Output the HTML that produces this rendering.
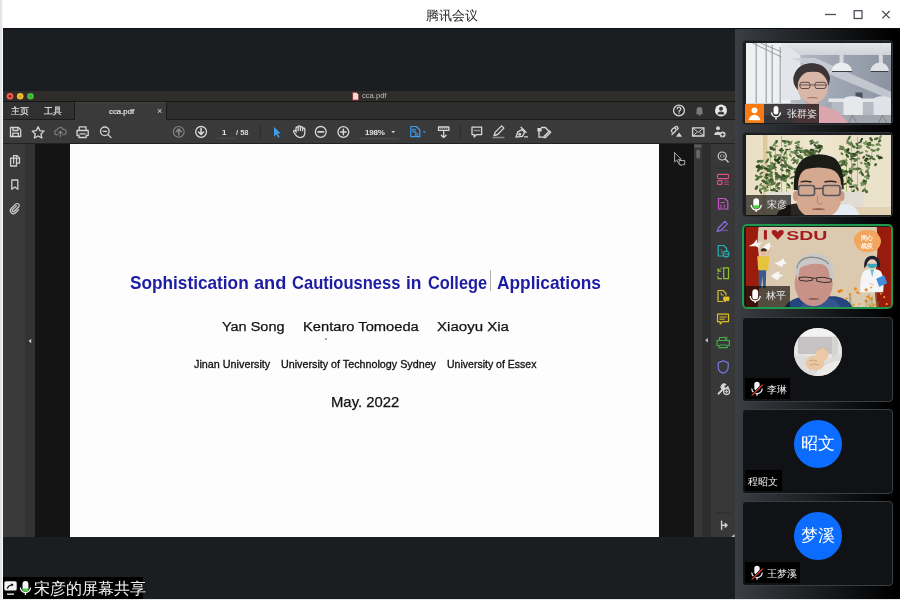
<!DOCTYPE html>
<html><head><meta charset="utf-8">
<style>
*{margin:0;padding:0;box-sizing:border-box}
html,body{width:900px;height:600px;overflow:hidden;background:#fff;font-family:"Liberation Sans",sans-serif}
.a,#tiles div{will-change:transform}
.a{position:absolute}
#title{left:0;top:0;width:900px;height:28px;background:#fff}
#title .t{left:2px;width:900px;top:6.8px;text-align:center;font-size:12.7px;color:#1e1e1e;line-height:18px}
#ledge{left:0;top:0;width:3px;height:600px;background:linear-gradient(90deg,#e2e4e8 0,#e2e4e8 2px,#fafafa 2px)}
#main{left:3px;top:28px;width:732px;height:571px;background:#1b1e21;border-top:1px solid #101214}
#bstrip{left:0;top:599px;width:900px;height:1px;background:#e8e8e8}
/* pdf window */
#pdf{left:3px;top:91px;width:732px;height:446px;background:#383838;overflow:hidden}
#ptitle{left:0;top:0;width:732px;height:11px;background:#2e2d2a;border-bottom:1px solid #161616}
#ptabs{left:0;top:11px;width:732px;height:18px;background:#2e2e2e;border-bottom:1px solid #1c1c1c}
#ptool{left:0;top:29px;width:732px;height:24px;background:#3a3a3a;border-bottom:1px solid #222}
#pbody{left:0;top:53px;width:732px;height:393px;background:#141414}
#right{left:735px;top:28px;width:165px;height:571px;background:linear-gradient(90deg,#3b3e43 0px,#2a2d31 40px,#0d0e10 120px,#000 160px);border-top:1px solid #0c0d0f}
.tile{position:absolute;left:743px;width:150px;height:85px;border-radius:4px;background:#222529;border:1px solid #2e3136}
.lbl{position:absolute;color:#eee;font-size:11px;line-height:19px;background:rgba(0,0,0,.75);white-space:nowrap}
</style></head><body>
<div id="title" class="a"><div class="t a">腾讯会议</div>
<svg class="a" style="left:820px;top:5px" width="75" height="20" viewBox="0 0 75 20">
<path d="M5 9.5H16" stroke="#4c5159" stroke-width="1.3"/>
<rect x="34.2" y="5.7" width="7.8" height="7.8" fill="none" stroke="#4c5159" stroke-width="1.3"/>
<path d="M62.3 6L69.7 13.4M69.7 6L62.3 13.4" stroke="#4c5159" stroke-width="1.3"/>
</svg>
</div>
<div id="ledge" class="a"></div>
<div id="main" class="a"></div>
<div id="pdf" class="a">
 <div id="ptitle" class="a"></div>
 <div id="ptabs" class="a"></div>
 <div class="a" style="left:0;top:11px;width:72px;height:18px;background:#303030;border-right:1px solid #1c1c1c;border-bottom:1px solid #1c1c1c"></div>
 <div class="a" style="left:72px;top:11px;width:91px;height:18px;background:#3a3a3a;border-top:1px solid #424242"></div>
 <div class="a" style="left:163px;top:11px;width:1px;height:18px;background:#1c1c1c"></div>
 <div id="ptool" class="a"></div>
 <div id="pbody" class="a"></div>
 <div class="a" style="left:0;top:53px;width:22px;height:393px;background:#3a3a3a"></div>
 <div class="a" style="left:22px;top:53px;width:10px;height:393px;background:#323232"></div>
 <div class="a" style="left:67px;top:53px;width:589px;height:393px;background:#fdfdfd"></div>
 <div class="a" style="left:691px;top:53px;width:8px;height:393px;background:#383838"></div>
 <div class="a" style="left:699px;top:53px;width:9px;height:393px;background:#2e2e2e"></div>
 <div class="a" style="left:708px;top:53px;width:24px;height:393px;background:#383838"></div>
</div>
<svg class="a" id="icons" style="left:0;top:0" width="900" height="600" viewBox="0 0 900 600" fill="none" stroke-linecap="round" stroke-linejoin="round">
<!-- traffic lights -->
<circle cx="10" cy="96.3" r="3.3" fill="#fb5b55"/><circle cx="10" cy="96.3" r="1.2" fill="#7d120e"/>
<circle cx="20.2" cy="96.3" r="3.3" fill="#f4bc2c"/><circle cx="20.2" cy="96.3" r="1" fill="#c4901a"/>
<circle cx="30.5" cy="96.3" r="3.3" fill="#45c03c"/><circle cx="30.5" cy="96.3" r="1" fill="#2f9a2a"/>
<!-- pdf file icon in title -->
<path d="M353 92.5h3.5l2 2v5.5h-5.5z" fill="#e8e0e0" stroke="#b04040" stroke-width=".8"/>
<!-- toolbar icons -->
<g stroke="#d4d4d4" stroke-width="1.3">
 <path d="M10.5 127.5h8l2.2 2.2v6.8h-10.2z"/><path d="M13 127.5v3h5v-3"/><path d="M12.8 136.5v-3.3h5.6v3.3"/>
 <path d="M38.1 126.8l1.8 3.8 4.1.5-3 2.9.8 4-3.7-2-3.7 2 .8-4-3-2.9 4.1-.5z"/>
 <path d="M77 130.5h11.2v5h-2v2h-7.2v-2h-2z"/><path d="M79.2 130.3v-3.4h6.8v3.4"/><path d="M80 133.8h5.2"/>
 <circle cx="104.8" cy="131.3" r="4.3"/><path d="M107.8 134.4l3.2 3.2"/><path d="M103 131.3h3.6" stroke-width="1.2"/>
</g>
<g stroke="#878787" stroke-width="1.1">
 <g transform="translate(60.4 132) scale(.85) translate(-60.4 -132)" stroke-width="1.2"><path d="M57.5 135.3h-1a2.8 2.8 0 0 1 0-5.6 3.8 3.8 0 0 1 7.3-.6 2.6 2.6 0 0 1 .6 6.2h-1.2"/><path d="M60.4 137.5v-6.3M58.3 133.2l2.1-2.1 2.1 2.1"/></g>
 <circle cx="178.75" cy="131.85" r="5.4"/><path d="M178.75 135v-5.5M176.3 131.6l2.45-2.5 2.45 2.5" stroke-width="1.6"/>
</g>
<g stroke="#d8d8d8" stroke-width="1.3">
 <circle cx="201.1" cy="131.9" r="5.4"/><path d="M201.1 128.6v5.5M198.6 132l2.5 2.5 2.5-2.5" stroke-width="1.6"/>
 <circle cx="320.75" cy="131.9" r="5.4"/><path d="M318 131.9h5.5" stroke-width="1.6"/>
 <circle cx="343.35" cy="132" r="5.4"/><path d="M340.6 132h5.5M343.35 129.3v5.5" stroke-width="1.5"/>
 <path d="M296 131.5v-3.5a1.1 1.1 0 0 1 2.2 0v2.5v-3.5a1.1 1.1 0 0 1 2.2 0v3.5v-2.8a1.1 1.1 0 0 1 2.2 0v3v-1.6a1.1 1.1 0 0 1 2.2 0v3.5c0 3-2 5-4.8 5c-2.2 0-3.4-1.2-4.6-3l-1.6-2.6a1 1 0 0 1 1.6-1.2l1 1.2z"/>
 <path d="M438.5 127h10.4v3.4h-10.4z"/><path d="M440.8 128.7h.1M442.8 128.7h.1M444.8 128.7h.1M446.8 128.7h.1" stroke-width="1"/><path d="M443.7 131.5v6M441.3 135.2l2.4 2.4 2.4-2.4"/>
 <path d="M472 127.2h9.6v7.4h-5.2l-2.2 2.4v-2.4h-2.2z"/><path d="M474.2 130.5h5.2" stroke="#8a8a8a" stroke-width="1.6"/>
 <path d="M494 135.5l1.2-3.4 6.5-6.2 2.2 2.2-6.3 6.4z"/><path d="M493 137.5h11" stroke="#8a8a8a"/>
 <path d="M516 137.2l1.8-5.4 4.2-2.2 2.6 2.6-2.2 4.2z"/><path d="M521 127.2l5 5"/><circle cx="519.7" cy="134.2" r=".9"/><path d="M524.5 136.8h3" stroke-width="1.3"/>
 <path d="M541.5 127.5h3.8l3.2 3.2"/><path d="M539 131v6.2h4"/><path d="M544 136.5l5.5-5.5 1.2 1.2-5.5 5.5h-1.2z"/><path d="M538 128.6h3v2.2h-3z" fill="#c9c9c9"/>
 <circle cx="679" cy="110.5" r="5.4"/><path d="M677.2 108.9a1.8 1.8 0 1 1 2.5 1.7c-.5.2-.7.6-.7 1.1v.4M679 113.6v.1" stroke-width="1.2"/>
 <path d="M672 134.5l3.8-3.8a1.8 1.8 0 0 0-2.5-2.5l-1.3 1.3a1.8 1.8 0 0 0 0 2.5M677.5 129.5a1.8 1.8 0 0 0 0-2.5 1.8 1.8 0 0 0-2.5 0"/><path d="M676 136.8l3-4.2 3.2 4.2z" fill="#d2d2d2" stroke="none"/>
 <path d="M692.6 127.8h11.3v8.2h-11.3z"/><path d="M692.6 127.8l5.65 4.5 5.65-4.5M692.6 136l4-3.4M703.9 136l-4-3.4" stroke-width=".9"/>
</g>
<path d="M274 127v9.6l2.3-2.4 1.9 3.6 1.4-.7-1.9-3.5 3.1-.2z" fill="#3c9ff2"/>
<g stroke="#3c9ff2" stroke-width="1.2"><path d="M410.8 126.5h5.5l3.5 3.5v6.6h-9z"/><path d="M413 129.3h2.2v2.2h-2.2zM415.6 133.8h2.2v2.2h-2.2zM414.1 132.2l2.6 1" stroke-width=".9"/></g>
<path d="M422.8 131.2h3.2l-1.6 1.9z" fill="#3c9ff2"/>
<path d="M391.3 131h3.8l-1.9 2.2z" fill="#d0d0d0"/>
<path d="M218 138.3h17.5M360 138.7h38.3" stroke="#4e4e4e" stroke-width="1"/>
<path d="M260.3 125.3v13.4M460.3 125.3v13.4" stroke="#2c2c2c" stroke-width="1"/>
<!-- bell -->
<path d="M695.6 114.2h7.8l-1-1.3v-3.1a2.9 2.9 0 0 0-5.8 0v3.1z" fill="#7b7b7b"/><circle cx="699.5" cy="115" r="1" fill="#7b7b7b"/>
<!-- user circle -->
<circle cx="721" cy="110.5" r="6" fill="#e6e6e6"/><circle cx="721" cy="108.7" r="2" fill="#3a3a3a"/><path d="M717.6 114.4a3.4 3 0 0 1 6.8 0z" fill="#3a3a3a"/>
<!-- person + -->
<g fill="#d2d2d2"><circle cx="718" cy="128.2" r="2"/><path d="M714.2 135a3.8 3.3 0 0 1 7.2-1.4v1.4z"/><circle cx="722.6" cy="134.6" r="3"/></g>
<path d="M721.2 134.6h2.8M722.6 133.2v2.8" stroke="#393939" stroke-width=".9"/>
<!-- left sidebar -->
<g stroke="#d0d0d0" stroke-width="1.3">
 <path d="M13.6 163.2v-7.6h3.6l2.3 2.3v5.3h-2.6"/><path d="M16.6 155.8v2.6h2.6" stroke-width="1"/><path d="M10.6 158.2h5.9v7.8h-5.9z"/>
 <path d="M11.8 180v9.3l3-2.2 3 2.2v-9.3z"/>
 <g transform="translate(14.5 208) scale(.85) translate(-14.5 -208)"><path d="M16.8 205.5l-4.4 4.4a1.3 1.3 0 0 0 1.9 1.9l5-5a2.4 2.4 0 0 0-3.4-3.4l-5.2 5.2a3.5 3.5 0 0 0 5 5l3.5-3.5" stroke-width="1.4"/></g>
</g>
<path d="M31.2 338.8v4.4l-2.6-2.2z" fill="#cfcfcf"/>
<path d="M707.8 338v4.4l-2.6-2.2z" fill="#cfcfcf"/>
<!-- scrollbar -->
<rect x="694.5" y="144.5" width="7" height="3" fill="#5c5c5c"/>
<rect x="696.3" y="149.5" width="3.6" height="9" rx="1.8" fill="#6a6a6a"/>
<!-- cursor in dark canvas -->
<path d="M674.6 152.8v9.2l2.1-2 1.8 3.1" stroke="#bdbdbd" stroke-width=".9"/><path d="M674.6 152.8l6.6 6.4-2.9.2" stroke="#bdbdbd" stroke-width=".9"/><path d="M679.5 160.5h5.2v4.2h-2.4l-1.2 1.2v-1.2h-1.6z" stroke="#bdbdbd" stroke-width=".9"/>
<!-- right tools -->
<g stroke-width="1.2">
 <g stroke="#d2d2d2"><circle cx="722.2" cy="156" r="4"/><path d="M725.2 159l3 3"/><path d="M721.2 154.8l-1.1 1.2 1.1 1.2M723.2 154.8l1.1 1.2-1.1 1.2" stroke-width=".8"/></g>
 <path d="M716.4 168h14" stroke="#2b2b2b" stroke-width="1"/>
 <g stroke="#dc4f8c"><rect x="717.5" y="174.3" width="11" height="4.3" rx="1"/><rect x="717.5" y="180.6" width="4.5" height="3.8" rx="1"/><path d="M724.5 180.9h4M724.5 182.7h4M724.5 184.5h4" stroke-width=".6"/></g>
 <g stroke="#c656cc"><path d="M718.5 198.5h6.3l3 3v7.5h-9.3z"/><path d="M721 202.5h3.4M721 205v2.5M724.3 205v2.5" stroke-width="1"/></g>
 <g stroke="#8e70ea"><path d="M717.2 231.5l1.2-3.5 6.5-6.6 2.4 2.4-6.5 6.6z"/><path d="M722.4 230.8c1-.8 1.7-1.2 2.2-.4.4.6 1 .6 1.6 0 .4-.4.8-.4 1.6.4" stroke-width=".9"/></g>
 <g stroke="#27b2b6"><path d="M718.2 245.5h5.5l3 3v2.2M722.5 256h-4.3v-10.5"/><circle cx="726" cy="254" r="2.9"/><path d="M724.6 254h2.8" stroke-width="1"/><path d="M721 249.5l1.2 2.5-1.2 1" stroke-width=".8"/></g>
 <g stroke="#8fc23a"><path d="M718 276.5v2.2h3.5M718 273v.8M718 269.5v1"/><path d="M723.7 267.8h4.8v10.9h-4.8z"/><path d="M721.8 267.7l-3.6 3.6M718.3 268.8v2.5h2.5" stroke-width="1"/></g>
 <g stroke="#e3c12b"><path d="M718 290.5h5.2l2.8 2.8v1.8M722.8 301.5h-4.8v-11"/><path d="M724 297h5v3.6h-2.8l-1.4 1.4v-1.4h-.8z" fill="#e3c12b" stroke-width=".9"/><path d="M721.2 292.8v2.2h2.2" stroke-width=".9"/></g>
 <g stroke="#dcbf22"><path d="M717.5 314.2h11v7.5h-6l-2.3 2.3v-2.3h-2.7z"/><path d="M719.8 317h6.5M719.8 319.2h4.5" stroke-width="1"/></g>
 <g stroke="#3fb046"><path d="M717 340.5h12.4v5h-2.2v2.2h-8v-2.2h-2.2z"/><path d="M719.4 340.3v-2.8h5.2l2 2" /><path d="M720.2 345h6" stroke-width="1"/><path d="M725.6 336.8l.9 1.3M727.5 337.5l-.9 1" stroke-width=".8"/></g>
 <g stroke="#7878e8"><path d="M723.2 360.8l5 2.1v4c0 3.2-2.5 5.4-5 6.2-2.5-.8-5-3-5-6.2v-4z"/></g>
 <g stroke="#d6d6d6"><path d="M718.6 393.6l4.2-4.2" stroke-width="2"/><path d="M722.2 389.6a3.2 3.2 0 0 1 3.9-5.2l-1.9 1.9.4 1.4 1.4.4 1.9-1.9a3.2 3.2 0 0 1-5.1 3.9z" fill="#d6d6d6" stroke-width=".8"/><circle cx="726.6" cy="391.6" r="3" fill="#3a3a3a" stroke-width="1.1"/><path d="M725.1 391.6h3M726.6 390.1v3" stroke-width=".9"/></g>
 <path d="M716 513h14" stroke="#2b2b2b" stroke-width="1"/>
 <g stroke="#d0d0d0" stroke-width="1.4"><path d="M721.6 521.2v8"/><path d="M722.5 525.2h4.5M725.2 523.4l1.9 1.8-1.9 1.8"/></g>
</g>
<path d="M731.5 537l3-3v3z" fill="#cfcfcf"/>
</svg>
<div class="a" style="left:361.5px;top:91px;font-size:7.6px;line-height:10px;color:#bdbdbd">cca.pdf</div>
<div class="a" style="left:11px;top:104px;font-size:9px;line-height:14px;color:#e6e6e6;letter-spacing:-0.5px;-webkit-text-stroke:.15px #e6e6e6">主页</div>
<div class="a" style="left:43.5px;top:104px;font-size:9px;line-height:14px;color:#e6e6e6;letter-spacing:-0.5px;-webkit-text-stroke:.15px #e6e6e6">工具</div>
<div class="a" style="left:108.5px;top:104.5px;font-size:7.8px;line-height:14px;color:#e4e4e4;-webkit-text-stroke:.2px #e4e4e4">cca.pdf</div>
<div class="a" style="left:157px;top:104px;font-size:9px;line-height:14px;color:#d8d8d8">×</div>
<div class="a" style="left:222px;top:127px;font-size:8px;line-height:12px;color:#e4e4e4;font-weight:bold">1</div>
<div class="a" style="left:236px;top:127.3px;font-size:7.5px;line-height:12px;color:#dcdcdc;font-weight:bold">/ 58</div>
<div class="a" style="left:365px;top:127px;font-size:8px;line-height:12px;color:#e4e4e4;letter-spacing:-0.2px;font-weight:bold">198%</div>
<div id="page" class="a" style="left:0;top:0;width:900px;height:600px;pointer-events:none">
<style>#page div{position:absolute;white-space:nowrap;transform-origin:0 0}
#page .ti{font-size:18.2px;line-height:18px;font-weight:bold;color:#1d1da3;top:274px}
#page .au{font-size:13.7px;line-height:14px;color:#111;top:320px;-webkit-text-stroke:.25px #111}
#page .af{font-size:10.2px;line-height:10px;color:#111;top:359.8px;-webkit-text-stroke:.3px #111}
</style>
<div class="ti" style="left:130px;transform:scaleX(.947)">Sophistication</div>
<div class="ti" style="left:254px;transform:scaleX(1)">and</div>
<div class="ti" style="left:291.5px;transform:scaleX(.909)">Cautiousness</div>
<div class="ti" style="left:406px;transform:scaleX(.96)">in</div>
<div class="ti" style="left:428px;transform:scaleX(.9)">College</div>
<div class="ti" style="left:496.5px;transform:scaleX(.953)">Applications</div>
<div class="au" style="left:222px;transform:scaleX(1.057)">Yan Song</div>
<div class="au" style="left:302.5px;transform:scaleX(1.074)">Kentaro Tomoeda</div>
<div class="au" style="left:437px;transform:scaleX(1.1)">Xiaoyu Xia</div>
<div class="af" style="left:193.5px;transform:scaleX(1.06)">Jinan University</div>
<div class="af" style="left:280.5px;transform:scaleX(1.054)">University of Technology Sydney</div>
<div class="af" style="left:447px;transform:scaleX(1.033)">University of Essex</div>
<div class="au" style="left:331px;top:394px;font-size:15px;line-height:15px;transform:scaleX(.99)">May. 2022</div>
</div>
<div class="a" style="left:489.5px;top:270px;width:1px;height:21px;background:#b0b0b0"></div>
<div class="a" style="left:324.5px;top:337.5px;width:1.5px;height:1.5px;background:#888;border-radius:1px"></div>
<div id="right" class="a"></div>
<div id="tiles" class="a" style="left:0;top:0;width:900px;height:600px">
<style>
#tiles .tile{position:absolute;left:742px;width:151px;height:85px;border-radius:4px;background:#1c1f22;border:1px solid #2d3035;overflow:hidden}
#tiles .e{position:absolute;left:742px;width:151px;height:85px;border-radius:4px;background:#111215;border:1.5px solid #3a3d42;overflow:hidden}
#tiles .img{position:absolute;left:3px;top:2px;width:144.5px;height:80px;overflow:hidden}
#tiles .a{position:absolute}
#tiles .img div,#tiles .img svg{position:absolute}
#tiles .lbl{position:absolute;left:2.5px;height:20.5px;color:#f0f0f0;font-size:11px;line-height:20px;white-space:nowrap;background:rgba(0,0,0,.6)}
#tiles .e .lbl{background:#000}
#tiles .av{position:absolute;left:50.5px;top:10.3px;width:47.6px;height:47.6px;border-radius:50%;background:#0b6cff;color:#fff;font-size:16.5px;line-height:47px;text-align:center;overflow:hidden}
</style>
<div class="tile" style="top:40px"><div class="img" style="background:#aeb3bd">
<svg width="145" height="80" viewBox="745.5 43 145 80" style="left:0;top:0">
<defs><filter id="bl1" x="-5%" y="-5%" width="110%" height="110%"><feGaussianBlur stdDeviation="0.55"/></filter>
<linearGradient id="wall1" x1="0" y1="0" x2="1" y2="0"><stop offset="0" stop-color="#dadde2"/><stop offset=".35" stop-color="#b5bac5"/><stop offset=".6" stop-color="#a0a7b4"/><stop offset="1" stop-color="#8b93a2"/></linearGradient>
<linearGradient id="ceil1" x1="0" y1="0" x2="0" y2="1"><stop offset="0" stop-color="#e4e6e9"/><stop offset="1" stop-color="#cfd2d7"/></linearGradient>
</defs>
<g filter="url(#bl1)">
<rect x="745" y="43" width="146" height="80" fill="url(#wall1)"/>
<path d="M778 43H891V55H800z" fill="url(#ceil1)"/>
<path d="M745 43H781L790 55V103H745z" fill="#eef0f2"/>
<path d="M781 43L800 55V100L781 100z" fill="#e2e5e9"/>
<path d="M790 58L891 100V92L815 58z" fill="#cdd1d8" opacity=".8"/>
<path d="M755.7 43V103M765.7 43V103M771.7 45V103M779.7 47V103" stroke="#8f939a" stroke-width="1"/>
<path d="M752 43L781 57M760 43L781 52" stroke="#8f939a" stroke-width=".9"/>
<path d="M841 43V63M880.3 43V63" stroke="#d8dade" stroke-width=".8"/>
<rect x="839" y="55" width="4" height="8" fill="#d6d9de"/><rect x="878.3" y="55" width="4" height="8" fill="#d6d9de"/>
<path d="M831 71.5Q832 63 841 62.5Q850.5 63 851.7 71.5z" fill="#eceef1"/>
<path d="M869.7 71.5Q871 63 879.5 62.5Q887.5 63 888.5 71.5z" fill="#dfe3e8"/>
<path d="M831.5 71.5H851.5M870 71.5H888" stroke="#3a3c40" stroke-width="1"/>
<rect x="828" y="98.5" width="63" height="3.5" fill="#e4e6e9"/>
<rect x="831" y="102" width="58" height="13" fill="#b6bac2"/>
<rect x="855" y="92.5" width="7" height="6" fill="#47505e"/>
<path d="M843 115V100Q843 96.5 852 96.3Q862.3 96.5 862.3 100V115z" fill="#e6e8ec"/>
<path d="M873 115V100Q873 96.5 882 96.3Q891 96.5 891 100V115z" fill="#dfe2e6"/>
<rect x="745" y="115" width="146" height="8" fill="#a2a6ae"/>
<path d="M852 115L848 123M852 115L856 123M882 115L878 123M882 115L886 123" stroke="#777b82" stroke-width=".8"/>
<path d="M792 123Q795 107 812 105Q838 106 847 123z" fill="#dba5ad"/>
<rect x="805" y="96" width="14" height="11" fill="#c9a39a"/>
<ellipse cx="811" cy="79.5" rx="18.2" ry="16" fill="#3d3636"/>
<ellipse cx="812.3" cy="87" rx="15.3" ry="16.3" fill="#d8b6a8"/>
<path d="M794 84Q792 66 808 63.5Q826 62 829.5 78L828 82Q826 73 818 72Q806 71 800 74Q797 78 797 90z" fill="#3d3636"/>
<path d="M798.5 85h28" stroke="#5e4c48" stroke-width=".9"/>
<rect x="799.5" y="82.3" width="10" height="6.2" rx="2" fill="none" stroke="#5e4c48" stroke-width="1"/>
<rect x="814.5" y="82.3" width="11" height="6.2" rx="2" fill="none" stroke="#5e4c48" stroke-width="1"/>
<path d="M807 98Q812 97 817 98" stroke="#a87868" stroke-width="1"/>
</g>
</svg>
</div>
<div class="a" style="left:2px;top:62.6px;width:19.4px;height:19.4px;background:#fa7a12"></div>
<svg class="a" style="left:2.2px;top:62.6px" width="19" height="19" viewBox="0 0 19 19"><circle cx="9.5" cy="6.3" r="2.9" fill="#fff"/><path d="M3.5 16.2Q4.8 10.8 9.5 10.7Q14.2 10.8 15.5 16.2z" fill="#fff"/></svg>
<div class="a" style="left:21.4px;top:62.6px;width:55.4px;height:19.4px;background:rgba(10,4,4,.7)"></div>
<svg class="a" style="left:27px;top:64px" width="12" height="16" viewBox="0 0 12 16"><rect x="3.6" y="1" width="4.8" height="8.6" rx="2.4" fill="#fff"/><path d="M1.6 7.5a4.4 4.4 0 0 0 8.8 0" stroke="#fff" stroke-width="1.4" fill="none"/><path d="M6 12v2.4" stroke="#fff" stroke-width="1.4"/></svg>
<div class="a" style="left:44px;top:62.5px;font-size:10.1px;line-height:20px;color:#f2f2f2">张群姿</div>
</div>
<div class="tile" style="top:132px"><div class="img" style="background:#e3d6bb">
<svg width="145" height="80" viewBox="745.5 135 145 80" style="left:0;top:0">
<defs><filter id="bl2" x="-5%" y="-5%" width="110%" height="110%"><feGaussianBlur stdDeviation="0.5"/></filter>
<linearGradient id="bg2" x1="0" y1="0" x2="1" y2="0"><stop offset="0" stop-color="#eadfc4"/><stop offset=".5" stop-color="#efe6cf"/><stop offset="1" stop-color="#e6dac0"/></linearGradient></defs>
<g filter="url(#bl2)">
<rect x="745" y="135" width="146" height="80" fill="url(#bg2)"/>
<rect x="762.5" y="135" width="4.5" height="80" fill="#dcc9a0"/>
<rect x="862" y="135" width="29" height="80" fill="#ebe2cc"/>
<path d="M775 192V140M781 192V136M786 192V150M792 190L804 150M770 190V155" stroke="#a8b878" stroke-width=".9"/>
<path d="M851 193V140M857 193V137M846 192V150M864 190L872 150" stroke="#a8b878" stroke-width=".9"/>
<ellipse cx="766.0" cy="177.9" rx="2.3" ry="1.2" fill="#465f34" transform="rotate(10 766.0 177.9)"/>
<ellipse cx="760.1" cy="176.4" rx="2.5" ry="0.9" fill="#587640" transform="rotate(-6 760.1 176.4)"/>
<ellipse cx="759.1" cy="177.2" rx="2.6" ry="1.2" fill="#587640" transform="rotate(-12 759.1 177.2)"/>
<ellipse cx="766.0" cy="183.6" rx="1.8" ry="0.8" fill="#587640" transform="rotate(3 766.0 183.6)"/>
<ellipse cx="757.3" cy="166.1" rx="2.5" ry="1.3" fill="#3e5a2e" transform="rotate(-21 757.3 166.1)"/>
<ellipse cx="769.0" cy="166.3" rx="2.6" ry="1.1" fill="#3e5a2e" transform="rotate(19 769.0 166.3)"/>
<ellipse cx="766.1" cy="168.9" rx="3.2" ry="1.4" fill="#2f4724" transform="rotate(25 766.1 168.9)"/>
<ellipse cx="762.9" cy="167.3" rx="1.6" ry="1.2" fill="#67844c" transform="rotate(-47 762.9 167.3)"/>
<ellipse cx="758.4" cy="169.3" rx="3.1" ry="1.4" fill="#4e6c3a" transform="rotate(-60 758.4 169.3)"/>
<ellipse cx="760.6" cy="189.1" rx="2.1" ry="1.3" fill="#7a9660" transform="rotate(-10 760.6 189.1)"/>
<ellipse cx="768.5" cy="166.4" rx="2.0" ry="0.9" fill="#587640" transform="rotate(-20 768.5 166.4)"/>
<ellipse cx="777.2" cy="184.3" rx="1.7" ry="1.3" fill="#4e6c3a" transform="rotate(-59 777.2 184.3)"/>
<ellipse cx="766.2" cy="175.6" rx="2.5" ry="1.1" fill="#587640" transform="rotate(-37 766.2 175.6)"/>
<ellipse cx="772.1" cy="164.2" rx="2.2" ry="1.1" fill="#587640" transform="rotate(59 772.1 164.2)"/>
<ellipse cx="756.0" cy="187.7" rx="2.5" ry="1.5" fill="#465f34" transform="rotate(-58 756.0 187.7)"/>
<ellipse cx="760.1" cy="191.9" rx="2.6" ry="0.9" fill="#2f4724" transform="rotate(59 760.1 191.9)"/>
<ellipse cx="760.7" cy="168.3" rx="2.5" ry="1.4" fill="#465f34" transform="rotate(-14 760.7 168.3)"/>
<ellipse cx="757.6" cy="166.7" rx="1.9" ry="1.2" fill="#587640" transform="rotate(-15 757.6 166.7)"/>
<ellipse cx="766.0" cy="190.7" rx="2.9" ry="0.9" fill="#7a9660" transform="rotate(-14 766.0 190.7)"/>
<ellipse cx="769.8" cy="169.9" rx="2.9" ry="1.0" fill="#3e5a2e" transform="rotate(-37 769.8 169.9)"/>
<ellipse cx="772.3" cy="190.1" rx="2.7" ry="1.1" fill="#3e5a2e" transform="rotate(-2 772.3 190.1)"/>
<ellipse cx="757.7" cy="161.5" rx="1.6" ry="1.5" fill="#4e6c3a" transform="rotate(-31 757.7 161.5)"/>
<ellipse cx="771.5" cy="168.2" rx="3.0" ry="1.1" fill="#465f34" transform="rotate(2 771.5 168.2)"/>
<ellipse cx="776.4" cy="191.3" rx="1.9" ry="1.2" fill="#3e5a2e" transform="rotate(42 776.4 191.3)"/>
<ellipse cx="769.5" cy="169.0" rx="2.8" ry="0.8" fill="#3e5a2e" transform="rotate(-11 769.5 169.0)"/>
<ellipse cx="761.5" cy="161.5" rx="2.1" ry="1.2" fill="#67844c" transform="rotate(-44 761.5 161.5)"/>
<ellipse cx="764.0" cy="188.5" rx="2.6" ry="1.3" fill="#67844c" transform="rotate(10 764.0 188.5)"/>
<ellipse cx="759.1" cy="161.1" rx="2.3" ry="1.1" fill="#4e6c3a" transform="rotate(-23 759.1 161.1)"/>
<ellipse cx="756.7" cy="179.1" rx="2.3" ry="1.3" fill="#4e6c3a" transform="rotate(-22 756.7 179.1)"/>
<ellipse cx="778.0" cy="162.4" rx="2.1" ry="0.8" fill="#2f4724" transform="rotate(52 778.0 162.4)"/>
<ellipse cx="772.2" cy="164.1" rx="2.1" ry="1.3" fill="#67844c" transform="rotate(48 772.2 164.1)"/>
<ellipse cx="775.2" cy="173.3" rx="1.6" ry="1.1" fill="#465f34" transform="rotate(-58 775.2 173.3)"/>
<ellipse cx="770.6" cy="172.1" rx="2.5" ry="0.9" fill="#4e6c3a" transform="rotate(17 770.6 172.1)"/>
<ellipse cx="777.9" cy="188.2" rx="2.1" ry="1.5" fill="#587640" transform="rotate(23 777.9 188.2)"/>
<ellipse cx="766.1" cy="174.8" rx="1.6" ry="1.3" fill="#2f4724" transform="rotate(-56 766.1 174.8)"/>
<ellipse cx="769.2" cy="175.4" rx="3.1" ry="0.9" fill="#3e5a2e" transform="rotate(34 769.2 175.4)"/>
<ellipse cx="770.5" cy="175.6" rx="2.1" ry="0.9" fill="#4e6c3a" transform="rotate(13 770.5 175.6)"/>
<ellipse cx="767.4" cy="184.1" rx="2.6" ry="1.1" fill="#67844c" transform="rotate(47 767.4 184.1)"/>
<ellipse cx="763.2" cy="181.3" rx="2.6" ry="1.4" fill="#3e5a2e" transform="rotate(31 763.2 181.3)"/>
<ellipse cx="760.4" cy="166.9" rx="2.5" ry="1.0" fill="#3e5a2e" transform="rotate(-44 760.4 166.9)"/>
<ellipse cx="766.9" cy="186.8" rx="1.6" ry="0.8" fill="#465f34" transform="rotate(58 766.9 186.8)"/>
<ellipse cx="774.1" cy="163.6" rx="2.0" ry="0.9" fill="#7a9660" transform="rotate(-10 774.1 163.6)"/>
<ellipse cx="769.8" cy="175.8" rx="2.7" ry="1.4" fill="#67844c" transform="rotate(15 769.8 175.8)"/>
<ellipse cx="763.0" cy="186.5" rx="3.0" ry="0.8" fill="#67844c" transform="rotate(25 763.0 186.5)"/>
<ellipse cx="768.6" cy="169.9" rx="2.5" ry="1.2" fill="#465f34" transform="rotate(-11 768.6 169.9)"/>
<ellipse cx="760.2" cy="184.6" rx="1.9" ry="0.9" fill="#67844c" transform="rotate(-54 760.2 184.6)"/>
<ellipse cx="769.8" cy="174.3" rx="2.4" ry="1.2" fill="#587640" transform="rotate(-16 769.8 174.3)"/>
<ellipse cx="757.7" cy="166.3" rx="2.3" ry="0.9" fill="#465f34" transform="rotate(-59 757.7 166.3)"/>
<ellipse cx="766.4" cy="182.9" rx="1.9" ry="1.3" fill="#3e5a2e" transform="rotate(5 766.4 182.9)"/>
<ellipse cx="776.8" cy="176.0" rx="1.8" ry="1.4" fill="#465f34" transform="rotate(24 776.8 176.0)"/>
<ellipse cx="760.9" cy="173.1" rx="2.2" ry="1.1" fill="#587640" transform="rotate(-36 760.9 173.1)"/>
<ellipse cx="775.5" cy="160.2" rx="2.5" ry="1.4" fill="#2f4724" transform="rotate(36 775.5 160.2)"/>
<ellipse cx="776.8" cy="174.8" rx="3.2" ry="0.9" fill="#587640" transform="rotate(44 776.8 174.8)"/>
<ellipse cx="773.6" cy="189.6" rx="1.9" ry="1.4" fill="#4e6c3a" transform="rotate(58 773.6 189.6)"/>
<ellipse cx="777.5" cy="177.2" rx="3.1" ry="1.0" fill="#465f34" transform="rotate(26 777.5 177.2)"/>
<ellipse cx="756.3" cy="176.2" rx="2.2" ry="1.2" fill="#4e6c3a" transform="rotate(32 756.3 176.2)"/>
<ellipse cx="766.7" cy="160.9" rx="3.0" ry="1.1" fill="#465f34" transform="rotate(-56 766.7 160.9)"/>
<ellipse cx="767.7" cy="182.0" rx="2.3" ry="1.5" fill="#3e5a2e" transform="rotate(48 767.7 182.0)"/>
<ellipse cx="767.4" cy="181.7" rx="3.1" ry="1.1" fill="#7a9660" transform="rotate(54 767.4 181.7)"/>
<ellipse cx="757.9" cy="167.1" rx="2.4" ry="1.4" fill="#2f4724" transform="rotate(7 757.9 167.1)"/>
<ellipse cx="773.3" cy="164.7" rx="1.9" ry="1.3" fill="#2f4724" transform="rotate(55 773.3 164.7)"/>
<ellipse cx="795.8" cy="169.3" rx="2.9" ry="1.5" fill="#67844c" transform="rotate(3 795.8 169.3)"/>
<ellipse cx="786.3" cy="149.6" rx="1.7" ry="0.8" fill="#2f4724" transform="rotate(-15 786.3 149.6)"/>
<ellipse cx="785.2" cy="142.1" rx="2.4" ry="1.5" fill="#7a9660" transform="rotate(-45 785.2 142.1)"/>
<ellipse cx="771.0" cy="148.0" rx="2.3" ry="1.4" fill="#2f4724" transform="rotate(36 771.0 148.0)"/>
<ellipse cx="780.9" cy="151.8" rx="1.7" ry="1.1" fill="#7a9660" transform="rotate(38 780.9 151.8)"/>
<ellipse cx="796.8" cy="162.9" rx="1.7" ry="1.1" fill="#67844c" transform="rotate(-56 796.8 162.9)"/>
<ellipse cx="776.3" cy="173.7" rx="1.6" ry="0.9" fill="#4e6c3a" transform="rotate(-59 776.3 173.7)"/>
<ellipse cx="777.1" cy="174.7" rx="2.6" ry="0.9" fill="#3e5a2e" transform="rotate(28 777.1 174.7)"/>
<ellipse cx="771.9" cy="164.5" rx="2.7" ry="1.3" fill="#67844c" transform="rotate(45 771.9 164.5)"/>
<ellipse cx="768.7" cy="170.4" rx="2.4" ry="0.9" fill="#465f34" transform="rotate(-35 768.7 170.4)"/>
<ellipse cx="788.2" cy="170.6" rx="1.9" ry="1.2" fill="#2f4724" transform="rotate(10 788.2 170.6)"/>
<ellipse cx="772.4" cy="183.9" rx="2.9" ry="1.4" fill="#587640" transform="rotate(-22 772.4 183.9)"/>
<ellipse cx="778.1" cy="184.3" rx="2.8" ry="0.9" fill="#3e5a2e" transform="rotate(-48 778.1 184.3)"/>
<ellipse cx="796.4" cy="146.4" rx="1.9" ry="0.9" fill="#4e6c3a" transform="rotate(40 796.4 146.4)"/>
<ellipse cx="781.5" cy="177.9" rx="1.8" ry="1.2" fill="#3e5a2e" transform="rotate(36 781.5 177.9)"/>
<ellipse cx="771.1" cy="167.4" rx="3.0" ry="1.5" fill="#67844c" transform="rotate(-46 771.1 167.4)"/>
<ellipse cx="784.2" cy="176.4" rx="3.2" ry="1.4" fill="#2f4724" transform="rotate(36 784.2 176.4)"/>
<ellipse cx="783.4" cy="141.2" rx="2.4" ry="1.2" fill="#465f34" transform="rotate(8 783.4 141.2)"/>
<ellipse cx="772.7" cy="148.9" rx="1.8" ry="0.9" fill="#3e5a2e" transform="rotate(-26 772.7 148.9)"/>
<ellipse cx="789.5" cy="167.8" rx="3.1" ry="1.1" fill="#3e5a2e" transform="rotate(32 789.5 167.8)"/>
<ellipse cx="778.5" cy="162.4" rx="2.1" ry="0.9" fill="#2f4724" transform="rotate(-15 778.5 162.4)"/>
<ellipse cx="788.3" cy="142.0" rx="1.8" ry="1.1" fill="#3e5a2e" transform="rotate(29 788.3 142.0)"/>
<ellipse cx="781.0" cy="149.4" rx="1.7" ry="1.4" fill="#3e5a2e" transform="rotate(-21 781.0 149.4)"/>
<ellipse cx="770.7" cy="180.4" rx="3.0" ry="1.5" fill="#465f34" transform="rotate(8 770.7 180.4)"/>
<ellipse cx="774.1" cy="168.1" rx="2.9" ry="1.0" fill="#67844c" transform="rotate(49 774.1 168.1)"/>
<ellipse cx="791.8" cy="177.3" rx="3.1" ry="0.9" fill="#465f34" transform="rotate(-20 791.8 177.3)"/>
<ellipse cx="785.2" cy="157.8" rx="2.8" ry="1.1" fill="#7a9660" transform="rotate(27 785.2 157.8)"/>
<ellipse cx="770.3" cy="156.4" rx="1.7" ry="1.4" fill="#7a9660" transform="rotate(59 770.3 156.4)"/>
<ellipse cx="796.9" cy="142.4" rx="3.1" ry="1.3" fill="#67844c" transform="rotate(-19 796.9 142.4)"/>
<ellipse cx="789.1" cy="167.3" rx="1.6" ry="1.2" fill="#2f4724" transform="rotate(-0 789.1 167.3)"/>
<ellipse cx="774.8" cy="145.7" rx="3.2" ry="0.8" fill="#7a9660" transform="rotate(14 774.8 145.7)"/>
<ellipse cx="791.6" cy="152.3" rx="2.4" ry="1.3" fill="#7a9660" transform="rotate(18 791.6 152.3)"/>
<ellipse cx="768.3" cy="152.4" rx="3.0" ry="1.2" fill="#67844c" transform="rotate(1 768.3 152.4)"/>
<ellipse cx="798.9" cy="167.3" rx="2.6" ry="1.4" fill="#4e6c3a" transform="rotate(-51 798.9 167.3)"/>
<ellipse cx="787.1" cy="176.4" rx="2.2" ry="1.5" fill="#4e6c3a" transform="rotate(-14 787.1 176.4)"/>
<ellipse cx="799.0" cy="181.1" rx="2.5" ry="0.8" fill="#2f4724" transform="rotate(53 799.0 181.1)"/>
<ellipse cx="781.5" cy="165.3" rx="2.0" ry="1.2" fill="#2f4724" transform="rotate(-2 781.5 165.3)"/>
<ellipse cx="776.6" cy="184.6" rx="2.7" ry="1.0" fill="#587640" transform="rotate(-58 776.6 184.6)"/>
<ellipse cx="775.8" cy="142.1" rx="2.2" ry="1.3" fill="#3e5a2e" transform="rotate(-54 775.8 142.1)"/>
<ellipse cx="778.1" cy="159.1" rx="3.2" ry="1.5" fill="#2f4724" transform="rotate(-51 778.1 159.1)"/>
<ellipse cx="797.0" cy="160.6" rx="1.9" ry="1.3" fill="#7a9660" transform="rotate(-55 797.0 160.6)"/>
<ellipse cx="771.2" cy="178.9" rx="1.7" ry="1.5" fill="#7a9660" transform="rotate(-31 771.2 178.9)"/>
<ellipse cx="790.6" cy="142.4" rx="2.3" ry="0.9" fill="#7a9660" transform="rotate(-54 790.6 142.4)"/>
<ellipse cx="784.9" cy="146.0" rx="1.7" ry="1.1" fill="#7a9660" transform="rotate(12 784.9 146.0)"/>
<ellipse cx="788.5" cy="172.7" rx="2.8" ry="1.2" fill="#67844c" transform="rotate(60 788.5 172.7)"/>
<ellipse cx="798.5" cy="175.2" rx="2.3" ry="1.2" fill="#3e5a2e" transform="rotate(-23 798.5 175.2)"/>
<ellipse cx="784.2" cy="180.6" rx="2.0" ry="1.3" fill="#67844c" transform="rotate(8 784.2 180.6)"/>
<ellipse cx="786.9" cy="170.4" rx="1.9" ry="1.5" fill="#465f34" transform="rotate(0 786.9 170.4)"/>
<ellipse cx="788.9" cy="149.4" rx="1.6" ry="0.8" fill="#587640" transform="rotate(-27 788.9 149.4)"/>
<ellipse cx="781.6" cy="169.9" rx="1.9" ry="1.0" fill="#4e6c3a" transform="rotate(31 781.6 169.9)"/>
<ellipse cx="797.2" cy="147.7" rx="2.6" ry="1.1" fill="#3e5a2e" transform="rotate(-3 797.2 147.7)"/>
<ellipse cx="774.7" cy="156.5" rx="1.7" ry="1.4" fill="#587640" transform="rotate(36 774.7 156.5)"/>
<ellipse cx="782.3" cy="179.5" rx="2.8" ry="0.9" fill="#465f34" transform="rotate(-9 782.3 179.5)"/>
<ellipse cx="776.3" cy="178.9" rx="1.8" ry="1.4" fill="#67844c" transform="rotate(12 776.3 178.9)"/>
<ellipse cx="777.3" cy="176.4" rx="3.1" ry="1.1" fill="#465f34" transform="rotate(-16 777.3 176.4)"/>
<ellipse cx="771.1" cy="182.0" rx="2.4" ry="1.1" fill="#4e6c3a" transform="rotate(8 771.1 182.0)"/>
<ellipse cx="794.1" cy="162.2" rx="2.8" ry="0.9" fill="#465f34" transform="rotate(-34 794.1 162.2)"/>
<ellipse cx="789.2" cy="143.9" rx="2.3" ry="1.3" fill="#67844c" transform="rotate(-21 789.2 143.9)"/>
<ellipse cx="796.2" cy="150.5" rx="2.7" ry="1.1" fill="#587640" transform="rotate(-46 796.2 150.5)"/>
<ellipse cx="790.7" cy="167.3" rx="3.1" ry="1.1" fill="#587640" transform="rotate(36 790.7 167.3)"/>
<ellipse cx="777.8" cy="155.2" rx="3.1" ry="1.3" fill="#7a9660" transform="rotate(2 777.8 155.2)"/>
<ellipse cx="770.7" cy="179.8" rx="2.1" ry="1.1" fill="#4e6c3a" transform="rotate(-13 770.7 179.8)"/>
<ellipse cx="774.2" cy="167.1" rx="2.2" ry="0.9" fill="#465f34" transform="rotate(11 774.2 167.1)"/>
<ellipse cx="773.7" cy="144.3" rx="3.0" ry="1.0" fill="#7a9660" transform="rotate(-57 773.7 144.3)"/>
<ellipse cx="784.5" cy="166.1" rx="2.0" ry="0.8" fill="#2f4724" transform="rotate(41 784.5 166.1)"/>
<ellipse cx="781.5" cy="167.9" rx="2.8" ry="0.9" fill="#67844c" transform="rotate(-50 781.5 167.9)"/>
<ellipse cx="791.6" cy="183.2" rx="1.5" ry="1.3" fill="#4e6c3a" transform="rotate(-48 791.6 183.2)"/>
<ellipse cx="794.1" cy="160.3" rx="1.9" ry="1.3" fill="#587640" transform="rotate(3 794.1 160.3)"/>
<ellipse cx="792.5" cy="158.9" rx="2.9" ry="1.0" fill="#67844c" transform="rotate(-44 792.5 158.9)"/>
<ellipse cx="783.6" cy="178.6" rx="2.7" ry="1.4" fill="#4e6c3a" transform="rotate(-11 783.6 178.6)"/>
<ellipse cx="794.4" cy="172.0" rx="1.5" ry="1.1" fill="#465f34" transform="rotate(-49 794.4 172.0)"/>
<ellipse cx="782.9" cy="166.0" rx="2.4" ry="1.3" fill="#4e6c3a" transform="rotate(36 782.9 166.0)"/>
<ellipse cx="781.5" cy="160.2" rx="1.9" ry="0.9" fill="#3e5a2e" transform="rotate(16 781.5 160.2)"/>
<ellipse cx="789.9" cy="155.4" rx="2.2" ry="1.0" fill="#7a9660" transform="rotate(56 789.9 155.4)"/>
<ellipse cx="769.9" cy="154.8" rx="2.0" ry="0.9" fill="#4e6c3a" transform="rotate(50 769.9 154.8)"/>
<ellipse cx="797.2" cy="176.2" rx="2.5" ry="1.4" fill="#4e6c3a" transform="rotate(-56 797.2 176.2)"/>
<ellipse cx="771.5" cy="148.9" rx="2.5" ry="1.2" fill="#3e5a2e" transform="rotate(-3 771.5 148.9)"/>
<ellipse cx="784.3" cy="161.2" rx="2.2" ry="1.4" fill="#67844c" transform="rotate(52 784.3 161.2)"/>
<ellipse cx="788.1" cy="185.2" rx="2.3" ry="1.0" fill="#2f4724" transform="rotate(46 788.1 185.2)"/>
<ellipse cx="797.3" cy="156.4" rx="2.8" ry="0.9" fill="#2f4724" transform="rotate(44 797.3 156.4)"/>
<ellipse cx="780.8" cy="150.4" rx="2.9" ry="1.1" fill="#3e5a2e" transform="rotate(3 780.8 150.4)"/>
<ellipse cx="784.5" cy="153.2" rx="2.6" ry="1.0" fill="#4e6c3a" transform="rotate(-59 784.5 153.2)"/>
<ellipse cx="783.1" cy="157.8" rx="1.9" ry="1.1" fill="#465f34" transform="rotate(45 783.1 157.8)"/>
<ellipse cx="781.3" cy="177.1" rx="1.9" ry="1.4" fill="#3e5a2e" transform="rotate(2 781.3 177.1)"/>
<ellipse cx="788.4" cy="187.7" rx="2.4" ry="0.8" fill="#67844c" transform="rotate(9 788.4 187.7)"/>
<ellipse cx="773.7" cy="149.8" rx="1.8" ry="0.9" fill="#465f34" transform="rotate(-18 773.7 149.8)"/>
<ellipse cx="787.7" cy="165.3" rx="2.7" ry="0.9" fill="#7a9660" transform="rotate(30 787.7 165.3)"/>
<ellipse cx="785.4" cy="164.3" rx="2.8" ry="1.1" fill="#4e6c3a" transform="rotate(50 785.4 164.3)"/>
<ellipse cx="770.9" cy="179.7" rx="1.6" ry="1.1" fill="#3e5a2e" transform="rotate(-1 770.9 179.7)"/>
<ellipse cx="820.6" cy="159.3" rx="2.0" ry="0.9" fill="#67844c" transform="rotate(-23 820.6 159.3)"/>
<ellipse cx="807.6" cy="154.3" rx="1.6" ry="0.9" fill="#67844c" transform="rotate(20 807.6 154.3)"/>
<ellipse cx="813.2" cy="154.9" rx="2.9" ry="1.3" fill="#465f34" transform="rotate(-59 813.2 154.9)"/>
<ellipse cx="805.2" cy="154.2" rx="2.0" ry="0.9" fill="#3e5a2e" transform="rotate(33 805.2 154.2)"/>
<ellipse cx="818.1" cy="156.9" rx="1.9" ry="1.2" fill="#587640" transform="rotate(-25 818.1 156.9)"/>
<ellipse cx="805.2" cy="150.8" rx="3.1" ry="1.3" fill="#67844c" transform="rotate(7 805.2 150.8)"/>
<ellipse cx="797.3" cy="143.8" rx="2.7" ry="1.0" fill="#7a9660" transform="rotate(53 797.3 143.8)"/>
<ellipse cx="810.2" cy="154.5" rx="2.3" ry="1.1" fill="#67844c" transform="rotate(-48 810.2 154.5)"/>
<ellipse cx="811.8" cy="142.6" rx="2.7" ry="0.9" fill="#587640" transform="rotate(-12 811.8 142.6)"/>
<ellipse cx="817.6" cy="151.9" rx="1.7" ry="0.8" fill="#4e6c3a" transform="rotate(58 817.6 151.9)"/>
<ellipse cx="806.7" cy="155.4" rx="3.1" ry="1.1" fill="#67844c" transform="rotate(1 806.7 155.4)"/>
<ellipse cx="812.5" cy="155.3" rx="2.7" ry="1.1" fill="#465f34" transform="rotate(51 812.5 155.3)"/>
<ellipse cx="811.8" cy="154.5" rx="2.7" ry="1.5" fill="#2f4724" transform="rotate(35 811.8 154.5)"/>
<ellipse cx="812.8" cy="152.2" rx="1.9" ry="0.9" fill="#4e6c3a" transform="rotate(-23 812.8 152.2)"/>
<ellipse cx="806.9" cy="151.1" rx="2.4" ry="1.4" fill="#3e5a2e" transform="rotate(39 806.9 151.1)"/>
<ellipse cx="811.5" cy="143.2" rx="2.4" ry="1.0" fill="#465f34" transform="rotate(-32 811.5 143.2)"/>
<ellipse cx="811.5" cy="150.3" rx="2.7" ry="1.5" fill="#2f4724" transform="rotate(2 811.5 150.3)"/>
<ellipse cx="814.3" cy="156.7" rx="2.5" ry="0.8" fill="#3e5a2e" transform="rotate(19 814.3 156.7)"/>
<ellipse cx="816.0" cy="142.7" rx="2.5" ry="1.3" fill="#7a9660" transform="rotate(-20 816.0 142.7)"/>
<ellipse cx="820.1" cy="147.2" rx="3.0" ry="1.1" fill="#7a9660" transform="rotate(28 820.1 147.2)"/>
<ellipse cx="801.4" cy="151.4" rx="2.5" ry="1.2" fill="#2f4724" transform="rotate(-28 801.4 151.4)"/>
<ellipse cx="819.6" cy="159.8" rx="2.1" ry="0.9" fill="#465f34" transform="rotate(52 819.6 159.8)"/>
<ellipse cx="795.1" cy="153.7" rx="1.9" ry="1.2" fill="#67844c" transform="rotate(40 795.1 153.7)"/>
<ellipse cx="800.0" cy="151.0" rx="2.3" ry="1.1" fill="#4e6c3a" transform="rotate(34 800.0 151.0)"/>
<ellipse cx="820.1" cy="160.0" rx="2.0" ry="1.3" fill="#3e5a2e" transform="rotate(29 820.1 160.0)"/>
<ellipse cx="805.3" cy="151.8" rx="2.8" ry="0.9" fill="#465f34" transform="rotate(-11 805.3 151.8)"/>
<ellipse cx="795.9" cy="150.6" rx="2.5" ry="0.9" fill="#4e6c3a" transform="rotate(2 795.9 150.6)"/>
<ellipse cx="802.1" cy="151.4" rx="1.6" ry="1.3" fill="#67844c" transform="rotate(27 802.1 151.4)"/>
<ellipse cx="816.3" cy="148.1" rx="2.5" ry="1.1" fill="#7a9660" transform="rotate(-11 816.3 148.1)"/>
<ellipse cx="811.8" cy="153.8" rx="2.2" ry="1.0" fill="#465f34" transform="rotate(47 811.8 153.8)"/>
<ellipse cx="807.5" cy="158.1" rx="2.2" ry="1.1" fill="#587640" transform="rotate(8 807.5 158.1)"/>
<ellipse cx="819.4" cy="150.5" rx="2.4" ry="1.1" fill="#2f4724" transform="rotate(-57 819.4 150.5)"/>
<ellipse cx="819.5" cy="145.9" rx="3.0" ry="1.3" fill="#2f4724" transform="rotate(12 819.5 145.9)"/>
<ellipse cx="815.3" cy="146.1" rx="3.0" ry="1.0" fill="#2f4724" transform="rotate(41 815.3 146.1)"/>
<ellipse cx="801.5" cy="157.5" rx="2.3" ry="0.9" fill="#4e6c3a" transform="rotate(49 801.5 157.5)"/>
<ellipse cx="809.7" cy="153.1" rx="3.0" ry="1.5" fill="#3e5a2e" transform="rotate(28 809.7 153.1)"/>
<ellipse cx="818.5" cy="147.4" rx="2.2" ry="1.4" fill="#2f4724" transform="rotate(-33 818.5 147.4)"/>
<ellipse cx="815.2" cy="151.3" rx="1.7" ry="1.4" fill="#4e6c3a" transform="rotate(-45 815.2 151.3)"/>
<ellipse cx="809.5" cy="159.0" rx="2.0" ry="1.3" fill="#4e6c3a" transform="rotate(-57 809.5 159.0)"/>
<ellipse cx="799.6" cy="148.8" rx="2.9" ry="1.1" fill="#7a9660" transform="rotate(-17 799.6 148.8)"/>
<ellipse cx="810.8" cy="140.9" rx="2.3" ry="1.0" fill="#4e6c3a" transform="rotate(-21 810.8 140.9)"/>
<ellipse cx="798.9" cy="155.5" rx="2.3" ry="0.9" fill="#465f34" transform="rotate(-25 798.9 155.5)"/>
<ellipse cx="819.9" cy="157.9" rx="2.0" ry="1.4" fill="#3e5a2e" transform="rotate(48 819.9 157.9)"/>
<ellipse cx="795.4" cy="152.7" rx="3.2" ry="0.9" fill="#587640" transform="rotate(16 795.4 152.7)"/>
<ellipse cx="800.2" cy="157.6" rx="2.6" ry="1.0" fill="#4e6c3a" transform="rotate(38 800.2 157.6)"/>
<ellipse cx="878.5" cy="144.7" rx="2.7" ry="0.9" fill="#7a9660" transform="rotate(24 878.5 144.7)"/>
<ellipse cx="877.5" cy="149.5" rx="1.8" ry="1.4" fill="#4e6c3a" transform="rotate(-46 877.5 149.5)"/>
<ellipse cx="867.6" cy="144.5" rx="1.9" ry="1.3" fill="#587640" transform="rotate(35 867.6 144.5)"/>
<ellipse cx="854.9" cy="155.5" rx="2.5" ry="1.0" fill="#4e6c3a" transform="rotate(-24 854.9 155.5)"/>
<ellipse cx="877.1" cy="155.7" rx="1.7" ry="1.3" fill="#67844c" transform="rotate(-4 877.1 155.7)"/>
<ellipse cx="843.1" cy="162.7" rx="2.4" ry="0.8" fill="#4e6c3a" transform="rotate(12 843.1 162.7)"/>
<ellipse cx="851.4" cy="144.0" rx="2.5" ry="0.9" fill="#465f34" transform="rotate(59 851.4 144.0)"/>
<ellipse cx="847.6" cy="142.0" rx="2.4" ry="0.9" fill="#587640" transform="rotate(48 847.6 142.0)"/>
<ellipse cx="879.5" cy="137.9" rx="3.1" ry="1.2" fill="#7a9660" transform="rotate(-60 879.5 137.9)"/>
<ellipse cx="875.7" cy="138.7" rx="2.4" ry="1.3" fill="#4e6c3a" transform="rotate(-17 875.7 138.7)"/>
<ellipse cx="866.3" cy="158.9" rx="2.0" ry="1.4" fill="#2f4724" transform="rotate(16 866.3 158.9)"/>
<ellipse cx="879.3" cy="157.8" rx="1.8" ry="1.3" fill="#2f4724" transform="rotate(-40 879.3 157.8)"/>
<ellipse cx="864.3" cy="143.6" rx="2.4" ry="1.0" fill="#7a9660" transform="rotate(26 864.3 143.6)"/>
<ellipse cx="868.9" cy="144.3" rx="1.9" ry="1.2" fill="#2f4724" transform="rotate(-0 868.9 144.3)"/>
<ellipse cx="841.4" cy="153.7" rx="1.6" ry="1.1" fill="#587640" transform="rotate(46 841.4 153.7)"/>
<ellipse cx="853.0" cy="154.0" rx="2.3" ry="1.1" fill="#2f4724" transform="rotate(-7 853.0 154.0)"/>
<ellipse cx="850.5" cy="159.4" rx="1.7" ry="0.9" fill="#4e6c3a" transform="rotate(17 850.5 159.4)"/>
<ellipse cx="863.2" cy="157.2" rx="1.7" ry="1.0" fill="#2f4724" transform="rotate(-55 863.2 157.2)"/>
<ellipse cx="852.6" cy="154.4" rx="2.8" ry="1.3" fill="#2f4724" transform="rotate(-0 852.6 154.4)"/>
<ellipse cx="866.0" cy="151.3" rx="1.9" ry="0.9" fill="#7a9660" transform="rotate(23 866.0 151.3)"/>
<ellipse cx="873.2" cy="159.0" rx="2.0" ry="1.1" fill="#4e6c3a" transform="rotate(24 873.2 159.0)"/>
<ellipse cx="868.2" cy="163.8" rx="2.3" ry="1.3" fill="#3e5a2e" transform="rotate(58 868.2 163.8)"/>
<ellipse cx="845.8" cy="149.7" rx="3.2" ry="0.8" fill="#587640" transform="rotate(-11 845.8 149.7)"/>
<ellipse cx="861.0" cy="139.6" rx="2.0" ry="1.1" fill="#2f4724" transform="rotate(-51 861.0 139.6)"/>
<ellipse cx="841.4" cy="164.9" rx="3.2" ry="1.2" fill="#465f34" transform="rotate(-25 841.4 164.9)"/>
<ellipse cx="844.8" cy="161.0" rx="2.3" ry="1.5" fill="#7a9660" transform="rotate(-16 844.8 161.0)"/>
<ellipse cx="853.5" cy="164.5" rx="1.9" ry="0.9" fill="#2f4724" transform="rotate(10 853.5 164.5)"/>
<ellipse cx="879.8" cy="157.6" rx="2.7" ry="1.4" fill="#2f4724" transform="rotate(11 879.8 157.6)"/>
<ellipse cx="875.5" cy="150.0" rx="3.1" ry="0.9" fill="#7a9660" transform="rotate(-15 875.5 150.0)"/>
<ellipse cx="842.0" cy="148.7" rx="1.8" ry="1.2" fill="#3e5a2e" transform="rotate(-40 842.0 148.7)"/>
<ellipse cx="848.1" cy="143.0" rx="2.8" ry="1.1" fill="#7a9660" transform="rotate(-1 848.1 143.0)"/>
<ellipse cx="865.1" cy="142.1" rx="1.8" ry="1.1" fill="#7a9660" transform="rotate(-51 865.1 142.1)"/>
<ellipse cx="867.7" cy="147.2" rx="2.6" ry="1.2" fill="#67844c" transform="rotate(29 867.7 147.2)"/>
<ellipse cx="860.5" cy="152.9" rx="2.7" ry="1.0" fill="#587640" transform="rotate(-17 860.5 152.9)"/>
<ellipse cx="846.1" cy="163.2" rx="1.7" ry="1.0" fill="#67844c" transform="rotate(41 846.1 163.2)"/>
<ellipse cx="844.8" cy="164.9" rx="2.2" ry="0.9" fill="#465f34" transform="rotate(46 844.8 164.9)"/>
<ellipse cx="853.0" cy="158.6" rx="2.6" ry="1.0" fill="#2f4724" transform="rotate(13 853.0 158.6)"/>
<ellipse cx="859.5" cy="142.3" rx="2.5" ry="0.8" fill="#2f4724" transform="rotate(-23 859.5 142.3)"/>
<ellipse cx="857.0" cy="152.2" rx="2.4" ry="1.2" fill="#3e5a2e" transform="rotate(-22 857.0 152.2)"/>
<ellipse cx="858.1" cy="147.6" rx="2.9" ry="1.2" fill="#3e5a2e" transform="rotate(-6 858.1 147.6)"/>
<ellipse cx="845.5" cy="151.5" rx="1.9" ry="1.0" fill="#67844c" transform="rotate(-19 845.5 151.5)"/>
<ellipse cx="848.6" cy="138.1" rx="2.8" ry="1.1" fill="#4e6c3a" transform="rotate(-59 848.6 138.1)"/>
<ellipse cx="870.5" cy="157.8" rx="2.6" ry="1.4" fill="#587640" transform="rotate(-34 870.5 157.8)"/>
<ellipse cx="867.6" cy="155.7" rx="3.0" ry="1.0" fill="#465f34" transform="rotate(16 867.6 155.7)"/>
<ellipse cx="843.6" cy="149.0" rx="2.3" ry="1.1" fill="#7a9660" transform="rotate(52 843.6 149.0)"/>
<ellipse cx="851.4" cy="156.7" rx="1.8" ry="1.1" fill="#3e5a2e" transform="rotate(-3 851.4 156.7)"/>
<ellipse cx="846.7" cy="155.6" rx="2.4" ry="1.3" fill="#3e5a2e" transform="rotate(49 846.7 155.6)"/>
<ellipse cx="872.2" cy="150.4" rx="2.7" ry="1.2" fill="#67844c" transform="rotate(24 872.2 150.4)"/>
<ellipse cx="840.9" cy="148.0" rx="3.0" ry="1.4" fill="#67844c" transform="rotate(-27 840.9 148.0)"/>
<ellipse cx="855.1" cy="160.7" rx="2.3" ry="1.0" fill="#67844c" transform="rotate(-30 855.1 160.7)"/>
<ellipse cx="840.9" cy="146.7" rx="2.5" ry="1.0" fill="#67844c" transform="rotate(20 840.9 146.7)"/>
<ellipse cx="847.4" cy="150.1" rx="2.1" ry="1.4" fill="#2f4724" transform="rotate(-56 847.4 150.1)"/>
<ellipse cx="868.3" cy="143.1" rx="2.6" ry="1.2" fill="#4e6c3a" transform="rotate(-11 868.3 143.1)"/>
<ellipse cx="856.6" cy="144.7" rx="2.3" ry="1.1" fill="#465f34" transform="rotate(56 856.6 144.7)"/>
<ellipse cx="855.4" cy="159.5" rx="2.4" ry="1.0" fill="#587640" transform="rotate(-17 855.4 159.5)"/>
<ellipse cx="879.1" cy="141.2" rx="2.0" ry="1.0" fill="#3e5a2e" transform="rotate(-34 879.1 141.2)"/>
<ellipse cx="860.8" cy="162.9" rx="1.5" ry="1.2" fill="#7a9660" transform="rotate(42 860.8 162.9)"/>
<ellipse cx="870.6" cy="139.2" rx="2.5" ry="1.4" fill="#465f34" transform="rotate(56 870.6 139.2)"/>
<ellipse cx="853.3" cy="146.7" rx="2.0" ry="1.3" fill="#4e6c3a" transform="rotate(23 853.3 146.7)"/>
<ellipse cx="867.5" cy="164.0" rx="1.8" ry="1.0" fill="#465f34" transform="rotate(23 867.5 164.0)"/>
<ellipse cx="872.2" cy="145.2" rx="2.0" ry="1.3" fill="#7a9660" transform="rotate(4 872.2 145.2)"/>
<ellipse cx="849.5" cy="144.0" rx="2.7" ry="1.4" fill="#67844c" transform="rotate(29 849.5 144.0)"/>
<ellipse cx="875.1" cy="164.7" rx="1.7" ry="1.3" fill="#465f34" transform="rotate(-46 875.1 164.7)"/>
<ellipse cx="858.1" cy="158.6" rx="1.6" ry="1.2" fill="#7a9660" transform="rotate(-10 858.1 158.6)"/>
<ellipse cx="859.3" cy="146.6" rx="2.4" ry="1.4" fill="#7a9660" transform="rotate(-13 859.3 146.6)"/>
<ellipse cx="868.6" cy="144.1" rx="2.7" ry="0.9" fill="#587640" transform="rotate(43 868.6 144.1)"/>
<ellipse cx="848.2" cy="152.8" rx="2.5" ry="1.1" fill="#3e5a2e" transform="rotate(25 848.2 152.8)"/>
<ellipse cx="864.9" cy="160.3" rx="1.8" ry="0.9" fill="#465f34" transform="rotate(15 864.9 160.3)"/>
<ellipse cx="851.7" cy="155.3" rx="2.3" ry="1.3" fill="#4e6c3a" transform="rotate(35 851.7 155.3)"/>
<ellipse cx="877.1" cy="144.5" rx="2.2" ry="1.2" fill="#67844c" transform="rotate(-12 877.1 144.5)"/>
<ellipse cx="866.0" cy="191.6" rx="1.8" ry="1.5" fill="#4e6c3a" transform="rotate(44 866.0 191.6)"/>
<ellipse cx="843.8" cy="171.4" rx="3.2" ry="0.9" fill="#2f4724" transform="rotate(-20 843.8 171.4)"/>
<ellipse cx="838.8" cy="177.4" rx="1.8" ry="0.8" fill="#7a9660" transform="rotate(-7 838.8 177.4)"/>
<ellipse cx="864.1" cy="180.8" rx="2.2" ry="1.2" fill="#3e5a2e" transform="rotate(32 864.1 180.8)"/>
<ellipse cx="867.4" cy="172.5" rx="1.9" ry="1.0" fill="#587640" transform="rotate(44 867.4 172.5)"/>
<ellipse cx="851.3" cy="186.7" rx="3.1" ry="1.0" fill="#2f4724" transform="rotate(-1 851.3 186.7)"/>
<ellipse cx="841.6" cy="170.4" rx="2.0" ry="1.2" fill="#4e6c3a" transform="rotate(-27 841.6 170.4)"/>
<ellipse cx="850.0" cy="170.3" rx="2.3" ry="1.1" fill="#4e6c3a" transform="rotate(-29 850.0 170.3)"/>
<ellipse cx="839.5" cy="162.1" rx="2.0" ry="0.9" fill="#465f34" transform="rotate(-38 839.5 162.1)"/>
<ellipse cx="852.5" cy="191.9" rx="3.2" ry="1.1" fill="#3e5a2e" transform="rotate(-56 852.5 191.9)"/>
<ellipse cx="848.5" cy="177.9" rx="1.6" ry="1.2" fill="#2f4724" transform="rotate(19 848.5 177.9)"/>
<ellipse cx="856.7" cy="168.9" rx="3.0" ry="1.5" fill="#67844c" transform="rotate(-7 856.7 168.9)"/>
<ellipse cx="863.0" cy="183.2" rx="3.0" ry="1.5" fill="#3e5a2e" transform="rotate(5 863.0 183.2)"/>
<ellipse cx="858.2" cy="168.7" rx="2.8" ry="1.0" fill="#4e6c3a" transform="rotate(2 858.2 168.7)"/>
<ellipse cx="838.3" cy="166.7" rx="1.5" ry="1.2" fill="#67844c" transform="rotate(37 838.3 166.7)"/>
<ellipse cx="861.8" cy="183.5" rx="2.0" ry="1.2" fill="#7a9660" transform="rotate(20 861.8 183.5)"/>
<ellipse cx="862.1" cy="184.6" rx="2.2" ry="1.3" fill="#7a9660" transform="rotate(-30 862.1 184.6)"/>
<ellipse cx="865.3" cy="160.8" rx="1.7" ry="1.0" fill="#2f4724" transform="rotate(27 865.3 160.8)"/>
<ellipse cx="853.2" cy="168.9" rx="2.6" ry="1.1" fill="#67844c" transform="rotate(-23 853.2 168.9)"/>
<ellipse cx="840.0" cy="180.9" rx="1.7" ry="1.0" fill="#2f4724" transform="rotate(29 840.0 180.9)"/>
<ellipse cx="844.3" cy="183.8" rx="2.0" ry="0.9" fill="#2f4724" transform="rotate(-18 844.3 183.8)"/>
<ellipse cx="842.7" cy="171.9" rx="2.2" ry="0.8" fill="#3e5a2e" transform="rotate(0 842.7 171.9)"/>
<ellipse cx="850.1" cy="170.3" rx="2.9" ry="1.3" fill="#2f4724" transform="rotate(-58 850.1 170.3)"/>
<ellipse cx="843.2" cy="162.1" rx="1.7" ry="1.5" fill="#2f4724" transform="rotate(-8 843.2 162.1)"/>
<ellipse cx="866.9" cy="167.0" rx="2.8" ry="1.4" fill="#7a9660" transform="rotate(38 866.9 167.0)"/>
<ellipse cx="840.1" cy="172.5" rx="3.0" ry="1.3" fill="#67844c" transform="rotate(3 840.1 172.5)"/>
<ellipse cx="838.3" cy="183.4" rx="2.1" ry="1.3" fill="#587640" transform="rotate(-35 838.3 183.4)"/>
<ellipse cx="856.5" cy="188.4" rx="2.7" ry="1.1" fill="#465f34" transform="rotate(56 856.5 188.4)"/>
<ellipse cx="865.7" cy="163.9" rx="2.7" ry="1.1" fill="#587640" transform="rotate(20 865.7 163.9)"/>
<ellipse cx="850.6" cy="172.3" rx="2.1" ry="1.2" fill="#3e5a2e" transform="rotate(-55 850.6 172.3)"/>
<ellipse cx="865.6" cy="176.9" rx="2.3" ry="1.2" fill="#7a9660" transform="rotate(11 865.6 176.9)"/>
<ellipse cx="865.9" cy="164.9" rx="2.1" ry="1.0" fill="#7a9660" transform="rotate(15 865.9 164.9)"/>
<ellipse cx="843.6" cy="175.0" rx="2.2" ry="1.4" fill="#2f4724" transform="rotate(-45 843.6 175.0)"/>
<ellipse cx="867.7" cy="175.7" rx="1.8" ry="1.4" fill="#3e5a2e" transform="rotate(35 867.7 175.7)"/>
<ellipse cx="842.3" cy="163.7" rx="2.4" ry="1.5" fill="#4e6c3a" transform="rotate(-52 842.3 163.7)"/>
<ellipse cx="864.1" cy="182.8" rx="2.4" ry="1.0" fill="#67844c" transform="rotate(-35 864.1 182.8)"/>
<ellipse cx="838.4" cy="173.7" rx="2.0" ry="1.3" fill="#7a9660" transform="rotate(-51 838.4 173.7)"/>
<ellipse cx="854.6" cy="185.2" rx="3.0" ry="0.9" fill="#7a9660" transform="rotate(-0 854.6 185.2)"/>
<ellipse cx="839.7" cy="187.8" rx="2.9" ry="0.9" fill="#4e6c3a" transform="rotate(-16 839.7 187.8)"/>
<ellipse cx="841.0" cy="161.2" rx="3.1" ry="1.0" fill="#67844c" transform="rotate(-25 841.0 161.2)"/>
<ellipse cx="850.5" cy="179.7" rx="2.9" ry="1.2" fill="#4e6c3a" transform="rotate(48 850.5 179.7)"/>
<ellipse cx="840.2" cy="191.6" rx="2.4" ry="1.0" fill="#3e5a2e" transform="rotate(55 840.2 191.6)"/>
<ellipse cx="867.1" cy="177.9" rx="2.1" ry="1.4" fill="#7a9660" transform="rotate(24 867.1 177.9)"/>
<ellipse cx="863.3" cy="190.3" rx="2.5" ry="1.3" fill="#587640" transform="rotate(-38 863.3 190.3)"/>
<ellipse cx="841.8" cy="182.2" rx="1.6" ry="1.0" fill="#7a9660" transform="rotate(-29 841.8 182.2)"/>
<ellipse cx="848.3" cy="179.9" rx="1.8" ry="1.5" fill="#67844c" transform="rotate(23 848.3 179.9)"/>
<ellipse cx="860.1" cy="171.5" rx="2.8" ry="0.9" fill="#67844c" transform="rotate(-51 860.1 171.5)"/>
<ellipse cx="846.0" cy="172.0" rx="2.2" ry="1.1" fill="#2f4724" transform="rotate(1 846.0 172.0)"/>
<ellipse cx="866.2" cy="171.1" rx="2.2" ry="1.1" fill="#587640" transform="rotate(-46 866.2 171.1)"/>
<ellipse cx="841.7" cy="188.1" rx="1.6" ry="1.3" fill="#465f34" transform="rotate(-33 841.7 188.1)"/>
<ellipse cx="852.3" cy="166.4" rx="2.5" ry="1.1" fill="#7a9660" transform="rotate(-52 852.3 166.4)"/>
<ellipse cx="850.6" cy="169.0" rx="2.6" ry="1.0" fill="#7a9660" transform="rotate(19 850.6 169.0)"/>
<ellipse cx="838.4" cy="179.5" rx="2.2" ry="0.9" fill="#4e6c3a" transform="rotate(47 838.4 179.5)"/>
<ellipse cx="845.5" cy="173.5" rx="1.7" ry="1.4" fill="#67844c" transform="rotate(32 845.5 173.5)"/>
<ellipse cx="841.1" cy="181.0" rx="3.0" ry="0.9" fill="#7a9660" transform="rotate(-16 841.1 181.0)"/>
<ellipse cx="849.2" cy="183.1" rx="2.7" ry="1.5" fill="#587640" transform="rotate(38 849.2 183.1)"/>
<ellipse cx="864.2" cy="181.4" rx="2.3" ry="1.1" fill="#3e5a2e" transform="rotate(-4 864.2 181.4)"/>
<ellipse cx="847.5" cy="181.5" rx="1.6" ry="1.0" fill="#2f4724" transform="rotate(-57 847.5 181.5)"/>
<ellipse cx="861.7" cy="173.9" rx="2.6" ry="1.3" fill="#3e5a2e" transform="rotate(60 861.7 173.9)"/>
<ellipse cx="840.0" cy="174.8" rx="2.8" ry="1.5" fill="#7a9660" transform="rotate(2 840.0 174.8)"/>
<rect x="765" y="192" width="26" height="23" fill="#e4e0d6"/>
<rect x="838" y="192" width="25" height="16" fill="#e1ddd4"/>
<rect x="745" y="207" width="146" height="8" fill="#dcc8a2" opacity=".6"/>
<path d="M776 215Q780 204 800 203L805 215z" fill="#2a2622"/>
<path d="M828 215Q832 204 848 204Q856 207 859 215z" fill="#e6ecf3"/>
<path d="M795.5 180Q795 166 818 164Q841 166 841 180V198Q840 211 830 216H806Q796 211 795.5 198z" fill="#d5a990"/>
<ellipse cx="795" cy="196" rx="2.5" ry="5" fill="#c89a82"/>
<ellipse cx="841.5" cy="196" rx="2.5" ry="5" fill="#c89a82"/>
<path d="M793.5 190Q792 166 804 158Q818 151 832 157Q844 163 843 190L840.5 184Q840 172 830 169Q818 166 806 169Q797 172 797.5 190z" fill="#1d1a19"/>
<path d="M800 182Q805 180.5 811 182M824 182Q830 180.5 836 182" stroke="#2e2622" stroke-width="1.3"/>
<rect x="798" y="185.5" width="16" height="10" rx="2.5" fill="#c8a898" fill-opacity=".3" stroke="#58585c" stroke-width="1.6"/>
<rect x="822.5" y="185.5" width="17" height="10" rx="2.5" fill="#c8a898" fill-opacity=".3" stroke="#58585c" stroke-width="1.6"/>
<path d="M814 188.5h8.5" stroke="#48484a" stroke-width="1.3"/>
<path d="M817 196Q816 202 818 204Q820 205 822 203" stroke="#b8866e" stroke-width="1" fill="none"/>
<path d="M812 209.5Q818 208 824 209.5" stroke="#a86a5c" stroke-width="1.6"/>
</g>
</svg>
</div>
<div class="a" style="left:2.5px;top:61.5px;width:44.5px;height:21px;background:rgba(12,10,8,.66)"></div>
<svg class="a" style="left:6.5px;top:63.5px" width="12" height="16" viewBox="0 0 12 16"><rect x="3.3" y="1.3" width="5.8" height="10" rx="2.9" fill="#fff"/><path d="M3.3 8.2h5.8v.4a2.9 2.9 0 0 1-5.8 0z" fill="#3ed83e"/><path d="M1.2 8a5 5 0 0 0 10 0" stroke="#fff" stroke-width="1.3" fill="none"/><path d="M6.2 13v2" stroke="#fff" stroke-width="1.3"/></svg>
<div class="a" style="left:23.5px;top:63.5px;font-size:10.1px;line-height:16px;color:#f0f0f0">宋彦</div>
</div>
<div class="tile" style="top:224px;border:2px solid #1f9a4c;border-radius:5px"><div class="img" style="left:2px;top:1px;background:#ddcdb4">
<svg width="145" height="80" viewBox="745.3 226.8 145 80" style="left:0;top:0">
<defs><filter id="bl3" x="-5%" y="-5%" width="110%" height="110%"><feGaussianBlur stdDeviation="0.45"/></filter></defs>
<g filter="url(#bl3)">
<rect x="745" y="226" width="146" height="82" fill="#dccab0"/>
<path d="M745 226H758Q756 240 758 255Q760 275 757 308H745z" fill="#9a1a10"/>
<path d="M891 226H876Q878 250 875 270Q873 290 876 308H891z" fill="#981a0e"/>
<g fill="#a41c1c">
<rect x="763.2" y="230" width="3" height="9.3"/>
<path d="M777 239.5L771.3 233.5Q770 230 773.3 229.9Q776 229.8 777 232Q778 229.8 780.7 229.9Q784 230 782.7 233.5z"/>
</g>
<text x="785.5" y="239.4" font-family="Liberation Sans" font-weight="bold" font-size="13" fill="#a41c1c" textLength="41.2" lengthAdjust="spacingAndGlyphs">SDU</text>
<path d="M854 243Q851 236 857 233Q860 229 867 230Q875 229 878 235Q882 240 879 246Q876 252 867 252Q857 252 854 243z" fill="#f2a55c"/>
<text x="866.5" y="239.5" font-size="5.6" font-weight="bold" fill="#fff" text-anchor="middle" font-family="Liberation Sans">同心</text>
<text x="866.5" y="248" font-size="5.6" font-weight="bold" fill="#fff" text-anchor="middle" font-family="Liberation Sans">战疫</text>
<g fill="#f6f6f4">
<path d="M748 246l5-3 3-4 1 4 5-1-4 3 1 3-4-2z"/>
<path d="M762 247l4-3 3-2 .5 3 3 1-3 1-1 3z"/>
<path d="M774 263l5-2 4-3 .5 3 3 2-4 1-1 3z"/>
<path d="M770 276l4-3 4-2 1 3 4 1-4 2-2 3z"/>
</g>
<path d="M767 255L771 246" stroke="#e8b890" stroke-width="1.4"/>
<circle cx="763" cy="252" r="2.8" fill="#e8b890"/><path d="M760 251Q760 248 763 248Q766 248 766 251z" fill="#3a2a20"/>
<path d="M756.5 256h12l-1 14h-10z" fill="#e6c23e"/>
<path d="M758 270h7.5l-.5 18h-2.5l-1-12-1 12h-2.5z" fill="#3a5a90"/>
<path d="M863.5 268Q862.5 256 871.5 255.5Q880 256 879.5 268Q876 266 875 262Q871 259 867 262Q866 266 863.5 268z" fill="#1f2230"/>
<ellipse cx="871.5" cy="264" rx="4.8" ry="5" fill="#f2d2bc"/>
<path d="M866.8 263.5h9.4v2.5q-4.7 4-9.4 0z" fill="#3aa6b8"/>
<path d="M859.5 292Q859 276 863 271Q866 268.5 871.5 268.5Q877 268.5 880 271Q884 276 882.5 292z" fill="#f5f5f7"/>
<path d="M869.5 269l2 8 2-8" fill="#6ac0d0"/>
<path d="M869 283l4 2" stroke="#f0c8b0" stroke-width="1.5"/>
<path d="M875.5 278.5l8-3.5 3 8-8 3.5z" fill="#3f8fdc"/>

<circle cx="865.4" cy="300.8" r="1.5" fill="#e67a10"/>
<circle cx="867.1" cy="296.6" r="1.5" fill="#f08a1c"/>
<circle cx="866.9" cy="304.0" r="1.0" fill="#f39a2a"/>
<circle cx="880.1" cy="293.6" r="1.0" fill="#f08a1c"/>
<circle cx="828.8" cy="290.3" r="1.1" fill="#f39a2a"/>
<circle cx="837.6" cy="301.9" r="1.0" fill="#e67a10"/>
<circle cx="854.7" cy="288.6" r="1.6" fill="#f08a1c"/>
<circle cx="840.6" cy="290.3" r="1.6" fill="#f08a1c"/>
<circle cx="845.4" cy="305.2" r="1.3" fill="#e67a10"/>
<circle cx="865.5" cy="289.6" r="1.6" fill="#f08a1c"/>
<circle cx="886.0" cy="303.9" r="1.1" fill="#f39a2a"/>
<circle cx="852.9" cy="304.7" r="1.1" fill="#f39a2a"/>
<circle cx="846.1" cy="298.1" r="0.9" fill="#e67a10"/>
<circle cx="870.5" cy="287.3" r="1.1" fill="#f39a2a"/>
<circle cx="856.8" cy="292.3" r="1.2" fill="#e67a10"/>
<circle cx="838.6" cy="291.1" r="1.6" fill="#e67a10"/>
<circle cx="849.5" cy="294.1" r="1.3" fill="#f39a2a"/>
<circle cx="850.0" cy="297.6" r="0.9" fill="#f08a1c"/>
<circle cx="870.5" cy="298.5" r="1.6" fill="#f08a1c"/>
<circle cx="873.3" cy="304.6" r="1.6" fill="#f39a2a"/>
<circle cx="858.7" cy="303.9" r="1.1" fill="#f39a2a"/>
<circle cx="834.5" cy="301.0" r="1.5" fill="#f39a2a"/>
<circle cx="830.2" cy="304.9" r="1.0" fill="#f39a2a"/>
<circle cx="858.8" cy="293.3" r="1.0" fill="#f39a2a"/>
<circle cx="883.5" cy="296.9" r="1.1" fill="#f39a2a"/>
<circle cx="846.4" cy="302.0" r="1.3" fill="#e67a10"/>
<circle cx="869.4" cy="305.9" r="1.0" fill="#f08a1c"/>
<circle cx="832.9" cy="298.0" r="1.5" fill="#f08a1c"/>
<path d="M838.8 307V300.3" stroke="#8aa060" stroke-width=".6"/>
<path d="M870.6 307V298.4" stroke="#8aa060" stroke-width=".6"/>
<path d="M848.8 307V292.8" stroke="#8aa060" stroke-width=".6"/>
<path d="M875.5 307V292.5" stroke="#8aa060" stroke-width=".6"/>
<path d="M852.7 307V303.7" stroke="#8aa060" stroke-width=".6"/>
<path d="M833.1 307V302.2" stroke="#8aa060" stroke-width=".6"/>
<path d="M877.3 307V300.8" stroke="#8aa060" stroke-width=".6"/>
<path d="M868.6 307V293.5" stroke="#8aa060" stroke-width=".6"/>
<path d="M849.5 307V294.1" stroke="#8aa060" stroke-width=".6"/>
<path d="M871.6 307V296.1" stroke="#8aa060" stroke-width=".6"/>
<path d="M850.5 307V306.0" stroke="#8aa060" stroke-width=".6"/>
<path d="M872.0 307V305.7" stroke="#8aa060" stroke-width=".6"/>
<path d="M850.5 307V298.8" stroke="#8aa060" stroke-width=".6"/>
<path d="M865.4 307V298.7" stroke="#8aa060" stroke-width=".6"/>
<path d="M784 307Q790 296 810 296H835Q848 298 852 307z" fill="#27457e"/>
<path d="M800 307Q804 300 812 298H828Q836 300 840 307z" fill="#3d5f9c" opacity=".6"/>
<ellipse cx="813" cy="283" rx="19" ry="23" fill="#c99288"/>
<path d="M795 270Q796 255 812 253Q828 254 832 266L833 282L829 278Q829 266 822 264Q808 262 799 268L797 281z" fill="#c9c8c8"/>
<path d="M796 268Q798 258 810 257Q822 257 828 264" stroke="#8a8888" stroke-width="1.2" fill="none"/>
<path d="M798 277.5Q804 276 811 277.5L812 280Q805 282 799 280zM816 277.5Q823 276 831 279L830 282Q823 283 816 281z" fill="none" stroke="#3a3030" stroke-width="1"/>
<path d="M811 278h5" stroke="#3a3030" stroke-width="1"/>
<path d="M808 299Q813 298 818 299" stroke="#8a5a50" stroke-width="1.2"/>
</g>
</svg>
</div>
<div class="a" style="left:1px;top:60.3px;width:44.5px;height:20.5px;background:rgba(14,10,8,.66)"></div>
<svg class="a" style="left:5px;top:62.3px" width="12" height="16" viewBox="0 0 12 16"><rect x="3.3" y="1.3" width="5.8" height="10" rx="2.9" fill="#fff"/><path d="M1.2 8a5 5 0 0 0 10 0" stroke="#fff" stroke-width="1.3" fill="none"/><path d="M6.2 13v2" stroke="#fff" stroke-width="1.3"/></svg>
<div class="a" style="left:22px;top:62.3px;font-size:10.1px;line-height:16px;color:#f0f0f0">林平</div>
</div>
<div class="e" style="top:317px">
 <div class="av" style="background:#d8d4d0"><svg width="48" height="48" viewBox="0 0 48 48" style="position:absolute;left:0;top:0">
 <defs><filter id="bl4"><feGaussianBlur stdDeviation="0.6"/></filter></defs>
 <g filter="url(#bl4)">
 <rect width="48" height="48" fill="#e8e6e4"/>
 <rect x="0" y="0" width="48" height="8" fill="#f4f2f0"/>
 <path d="M4 9H38Q40 9 40 12V26H4z" fill="#c4c2c2"/>
 <path d="M38 9H44V30H38z" fill="#d6d4d2"/>
 <path d="M0 28Q10 26 22 30L30 34Q38 28 48 26V48H0z" fill="#dedcdb"/>
 <path d="M20 48Q26 38 38 34Q44 32 48 33V48z" fill="#ecebea"/>
 <ellipse cx="21" cy="35" rx="9.5" ry="7.5" fill="#e9c6a4"/>
 <ellipse cx="28" cy="27" rx="6.5" ry="6.5" fill="#ebc8a6"/>
 <path d="M23 22l1-3 3 2M30 21l3-2 .5 3" fill="#e0b28c"/>
 <path d="M15 33q4-2 8 0M16 37q5-2 9 0" stroke="#c99a74" stroke-width=".8" fill="none"/>
 </g></svg></div>
 <div class="lbl" style="left:1.5px;top:60.3px;width:45px;height:21px"><svg class="a" style="left:5px;top:3px" width="14" height="16" viewBox="0 0 14 16"><rect x="4.3" y="0.8" width="5.4" height="9" rx="2.7" fill="#f4f4f4"/><path d="M1.8 7.4a5.2 5.2 0 0 0 10.4 0" stroke="#f4f4f4" stroke-width="1.2" fill="none"/><path d="M7 12.6v2.2" stroke="#f4f4f4" stroke-width="1.2"/><path d="M1.6 14.6L12.6 3.8" stroke="#000" stroke-width="2.4"/><path d="M1.6 14.6L12.6 3.8" stroke="#e53b30" stroke-width="1.2"/></svg><span style="position:absolute;left:21.5px;top:1px;font-size:10.3px;line-height:21px">李琳</span></div>
</div>
<div class="e" style="top:409px">
 <div class="av">昭文</div>
 <div class="lbl" style="left:1.5px;top:60.3px;width:37px;height:21px"><span style="position:absolute;left:3.3px;top:1px;font-size:10.3px;line-height:21px">程昭文</span></div>
</div>
<div class="e" style="top:501px">
 <div class="av">梦溪</div>
 <div class="lbl" style="left:1.5px;top:60.3px;width:55.3px;height:21px"><svg class="a" style="left:5px;top:3px" width="14" height="16" viewBox="0 0 14 16"><rect x="4.3" y="0.8" width="5.4" height="9" rx="2.7" fill="#f4f4f4"/><path d="M1.8 7.4a5.2 5.2 0 0 0 10.4 0" stroke="#f4f4f4" stroke-width="1.2" fill="none"/><path d="M7 12.6v2.2" stroke="#f4f4f4" stroke-width="1.2"/><path d="M1.6 14.6L12.6 3.8" stroke="#000" stroke-width="2.4"/><path d="M1.6 14.6L12.6 3.8" stroke="#e53b30" stroke-width="1.2"/></svg><span style="position:absolute;left:21.5px;top:1px;font-size:10.3px;line-height:21px">王梦溪</span></div>
</div>
</div>
<div class="a" style="left:3px;top:577px;width:140px;height:21.5px;background:#000"></div>
<svg class="a" style="left:0;top:570px" width="40" height="30" viewBox="0 570 40 30">
<rect x="4.3" y="581.3" width="12.4" height="9.3" rx="1.6" fill="#f4f4f4"/>
<path d="M7.2 588.6Q8.4 585.3 12.2 584.8" stroke="#000" stroke-width="1.1" fill="none"/><path d="M11.3 583.2l2.3 1.5-1.9 1.9z" fill="#000"/>
<rect x="7" y="593.5" width="7" height="1.3" fill="#f4f4f4"/>
<rect x="22.5" y="581" width="5.9" height="10.3" rx="2.95" fill="#f4f4f4"/>
<path d="M22.5 588.6h5.9v.2a2.95 2.95 0 0 1-5.9 0z" fill="#3ed83e"/>
<path d="M20.4 587.5a5.05 5.05 0 0 0 10.1 0" stroke="#f4f4f4" stroke-width="1.3" fill="none"/><path d="M25.45 592.5v2.6" stroke="#f4f4f4" stroke-width="1.3"/>
</svg>
<div class="a" style="left:33.5px;top:579.3px;font-size:15.5px;line-height:20px;color:#f2f2f2;white-space:nowrap">宋彦的屏幕共享</div>
<div id="bstrip" class="a"></div>
</body></html>
